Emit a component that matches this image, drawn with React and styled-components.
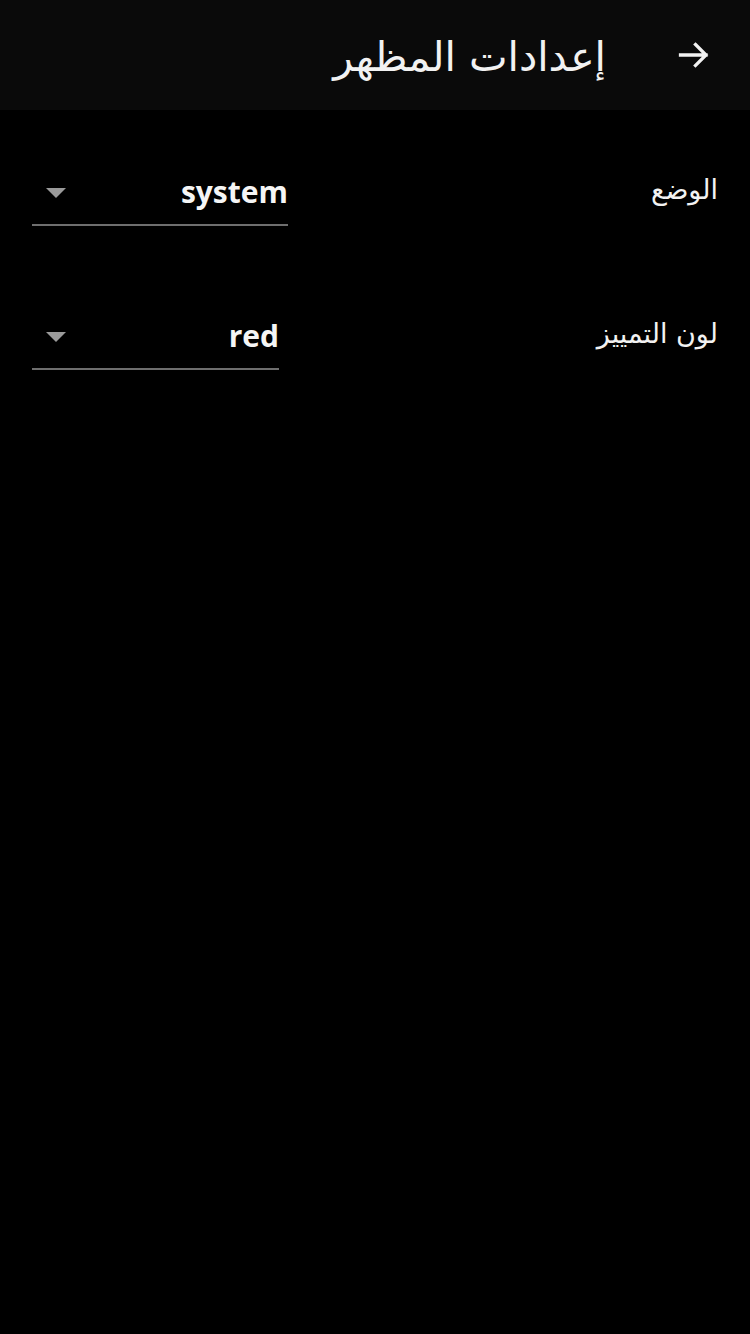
import React from "react";
import styled, { createGlobalStyle } from "styled-components";

const Global = createGlobalStyle`
  html, body { margin: 0; padding: 0; background: #000; }
  body { font-family: "DejaVu Sans", "Noto Sans", sans-serif; color: #f2f2f2; }
`;

const Page = styled.div`
  direction: rtl;
  min-height: 1334px;
  background: #000;
`;

const Header = styled.header`
  height: 110px;
  background: #0a0a0a;
  display: flex;
  align-items: center;
  padding: 0 38px 0 0;
  gap: 70px;
  box-sizing: border-box;
`;

const BackButton = styled.button`
  background: none;
  border: none;
  padding: 0;
  width: 36px;
  height: 36px;
  display: flex;
  align-items: center;
  justify-content: center;
  color: #f2f2f2;
  cursor: pointer;
`;

const Title = styled.h1`
  margin: 0;
  font-size: 41px;
  font-weight: 400;
  color: #f2f2f2;
  line-height: 1;
  padding-top: 4px;
`;

const List = styled.div`
  display: flex;
  flex-direction: column;
  gap: 78px;
  padding: 50px 32px 0;
`;

const Row = styled.div`
  display: flex;
  justify-content: space-between;
  align-items: flex-start;
`;

const Label = styled.span`
  font-size: 27px;
  color: #f2f2f2;
  padding-top: 14px;
`;

const Select = styled.div`
  width: ${(p) => p.$width}px;
  height: 66px;
  box-sizing: border-box;
  border-bottom: 2px solid #6e6e6e;
  display: flex;
  justify-content: space-between;
  align-items: center;
  padding: 0 0 2px 14px;
`;

const Value = styled.span`
  font-family: "Open Sans", "DejaVu Sans", sans-serif;
  font-size: 30px;
  font-weight: 700;
  color: #f5f5f5;
  direction: ltr;
`;

const Caret = styled.span`
  width: 0;
  height: 0;
  border-left: 10px solid transparent;
  border-right: 10px solid transparent;
  border-top: 10px solid #9a9a9a;
  margin-top: 4px;
`;

const Arrow = () => (
  <svg width="36" height="36" viewBox="0 0 24 24" fill="none" stroke="currentColor" strokeWidth="2.2" strokeLinecap="square">
    <path d="M3 12h17M13 5l7 7-7 7" />
  </svg>
);

export default function App() {
  return (
    <>
      <Global />
      <Page>
        <Header>
          <BackButton aria-label="رجوع"><Arrow /></BackButton>
          <Title>إعدادات المظهر</Title>
        </Header>
        <List>
          <Row>
            <Label>الوضع</Label>
            <Select $width={256}>
              <Value>system</Value>
              <Caret />
            </Select>
          </Row>
          <Row>
            <Label>لون التمييز</Label>
            <Select $width={247}>
              <Value>red</Value>
              <Caret />
            </Select>
          </Row>
        </List>
      </Page>
    </>
  );
}
